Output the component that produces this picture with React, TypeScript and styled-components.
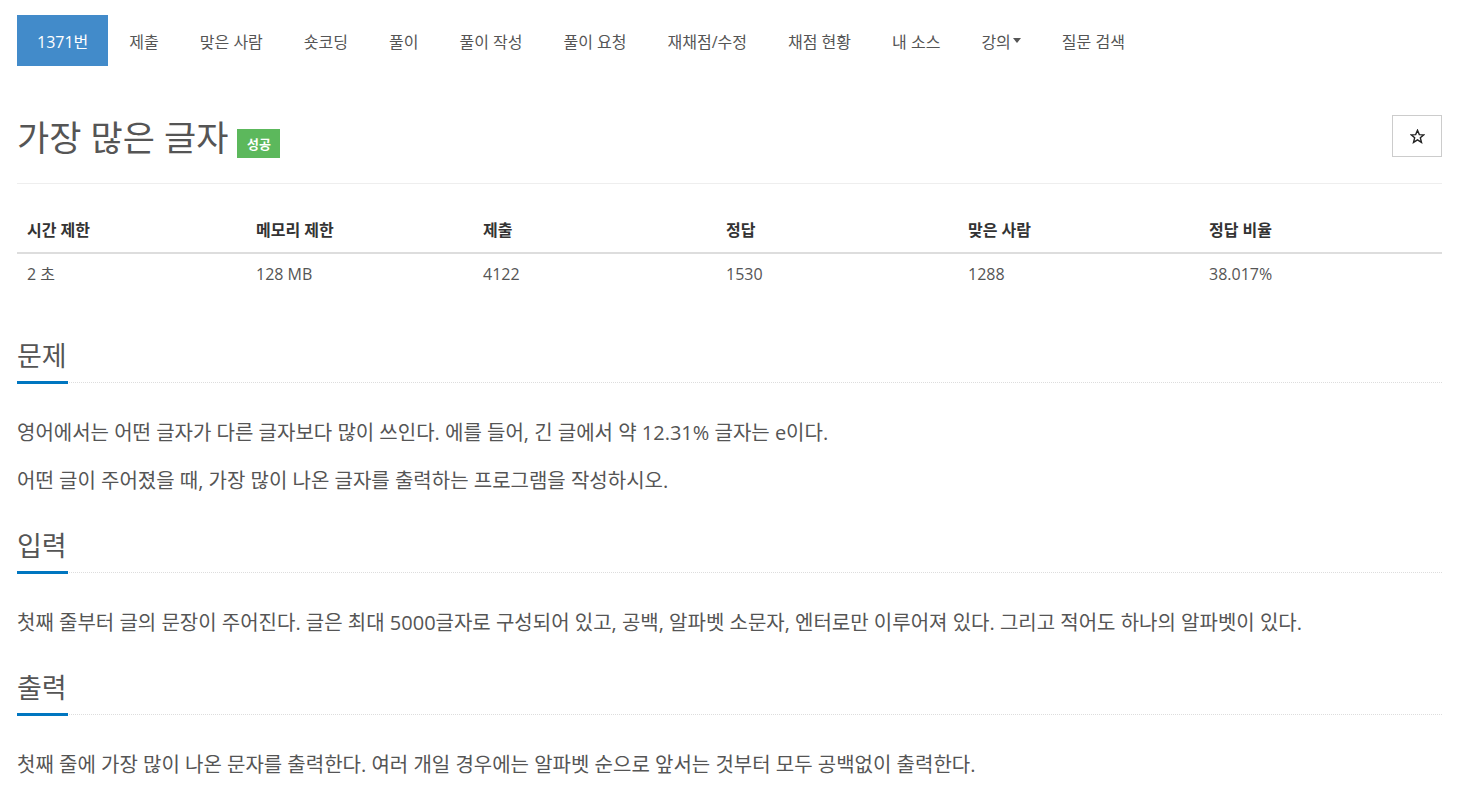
import React from "react";
import styled, { createGlobalStyle } from "styled-components";

const Global = createGlobalStyle`
  html, body { margin: 0; padding: 0; background: #fff; }
  body {
    font-family: "Open Sans", "Noto Sans CJK KR", sans-serif;
    color: #555;
    -webkit-font-smoothing: antialiased;
  }
  * { box-sizing: border-box; }
`;

const Page = styled.div`
  width: 1464px;
  padding: 15px 22px 0 17px;
`;

const Nav = styled.ul`
  display: flex;
  list-style: none;
  margin: 0;
  padding: 0;
  gap: 1px;
`;

const NavItem = styled.li<{ $active?: boolean }>`
  display: flex;
  align-items: center;
  height: 51px;
  padding: 0 20px;
  font-size: 16px;
  color: ${(p) => (p.$active ? "#fff" : "#555")};
  background: ${(p) => (p.$active ? "#428bca" : "transparent")};
  white-space: nowrap;
`;

const Caret = styled.span`
  display: inline-block;
  width: 0;
  height: 0;
  margin-left: 2px;
  border-top: 5px solid #555;
  border-left: 4px solid transparent;
  border-right: 4px solid transparent;
`;

const TitleRow = styled.div`
  display: flex;
  align-items: center;
  justify-content: space-between;
  margin-top: 50px;
  padding-bottom: 23px;
  border-bottom: 1px solid #eee;
`;

const TitleLeft = styled.div`
  display: flex;
  align-items: center;
  gap: 9px;
`;

const Title = styled.h1`
  margin: 0;
  font-size: 35px;
  font-weight: 400;
  line-height: 44px;
  color: #555;
`;

const Badge = styled.span`
  display: inline-flex;
  align-items: center;
  justify-content: center;
  width: 43px;
  height: 29px;
  margin-top: 10px;
  background: #5cb85c;
  color: #fff;
  font-size: 13px;
  font-weight: 600;
`;

const StarButton = styled.button`
  display: flex;
  align-items: center;
  justify-content: center;
  width: 50px;
  height: 42px;
  margin-top: -4px;
  border: 1px solid #ccc;
  background: #fff;
  padding: 0;
`;

const Table = styled.table`
  width: 100%;
  margin-top: 24px;
  border-collapse: collapse;
  table-layout: fixed;
  font-size: 16px;
`;

const Th = styled.th<{ $w: number }>`
  width: ${(p) => p.$w}px;
  text-align: left;
  font-weight: 700;
  color: #333;
  padding: 10px 10px;
  line-height: 24px;
  border-bottom: 2px solid #ddd;
`;

const Td = styled.td`
  padding: 8px 10px;
  line-height: 24px;
  color: #555;
`;

const Section = styled.section<{ $first?: boolean }>`
  margin-top: ${(p) => (p.$first ? "44px" : "0")};
`;

const HeadlineWrap = styled.div`
  position: relative;
  border-bottom: 1px dotted #ddd;
  padding-bottom: 8px;
`;

const Headline = styled.h2`
  margin: 0;
  font-size: 27px;
  font-weight: 400;
  line-height: 36px;
  color: #555;
  &::after {
    content: "";
    position: absolute;
    left: 0;
    bottom: -2px;
    width: 51px;
    height: 3px;
    background: #0076c0;
  }
`;

const Body = styled.div`
  padding-top: 35px;
  padding-bottom: 14px;
`;

const P = styled.p`
  margin: 0 0 18px;
  font-size: 20px;
  line-height: 30px;
  color: #555;
`;

const StarIcon = () => (
  <svg width="15" height="15" viewBox="0 0 24 24" fill="none" stroke="#222" strokeWidth="2.2" strokeLinejoin="miter">
    <polygon points="12,2 14.9,9 22,9.3 16.5,14 18.4,21.5 12,17.3 5.6,21.5 7.5,14 2,9.3 9.1,9" />
  </svg>
);

const navItems = [
  "제출",
  "맞은 사람",
  "숏코딩",
  "풀이",
  "풀이 작성",
  "풀이 요청",
  "재채점/수정",
  "채점 현황",
  "내 소스",
];

const stats: [string, string, number][] = [
  ["시간 제한", "2 초", 229],
  ["메모리 제한", "128 MB", 227],
  ["제출", "4122", 243],
  ["정답", "1530", 242],
  ["맞은 사람", "1288", 241],
  ["정답 비율", "38.017%", 243],
];

export default function App() {
  return (
    <Page>
      <Global />
      <Nav>
        <NavItem $active>1371번</NavItem>
        {navItems.map((n) => (
          <NavItem key={n}>{n}</NavItem>
        ))}
        <NavItem>
          강의<Caret />
        </NavItem>
        <NavItem>질문 검색</NavItem>
      </Nav>

      <TitleRow>
        <TitleLeft>
          <Title>가장 많은 글자</Title>
          <Badge>성공</Badge>
        </TitleLeft>
        <StarButton aria-label="star">
          <StarIcon />
        </StarButton>
      </TitleRow>

      <Table>
        <thead>
          <tr>
            {stats.map(([h, , w]) => (
              <Th key={h} $w={w}>{h}</Th>
            ))}
          </tr>
        </thead>
        <tbody>
          <tr>
            {stats.map(([h, v]) => (
              <Td key={h}>{v}</Td>
            ))}
          </tr>
        </tbody>
      </Table>

      <Section $first>
        <HeadlineWrap>
          <Headline>문제</Headline>
        </HeadlineWrap>
        <Body>
          <P>영어에서는 어떤 글자가 다른 글자보다 많이 쓰인다. 에를 들어, 긴 글에서 약 12.31% 글자는 e이다.</P>
          <P>어떤 글이 주어졌을 때, 가장 많이 나온 글자를 출력하는 프로그램을 작성하시오.</P>
        </Body>
      </Section>

      <Section>
        <HeadlineWrap>
          <Headline>입력</Headline>
        </HeadlineWrap>
        <Body>
          <P>첫째 줄부터 글의 문장이 주어진다. 글은 최대 5000글자로 구성되어 있고, 공백, 알파벳 소문자, 엔터로만 이루어져 있다. 그리고 적어도 하나의 알파벳이 있다.</P>
        </Body>
      </Section>

      <Section>
        <HeadlineWrap>
          <Headline>출력</Headline>
        </HeadlineWrap>
        <Body>
          <P>첫째 줄에 가장 많이 나온 문자를 출력한다. 여러 개일 경우에는 알파벳 순으로 앞서는 것부터 모두 공백없이 출력한다.</P>
        </Body>
      </Section>
    </Page>
  );
}
